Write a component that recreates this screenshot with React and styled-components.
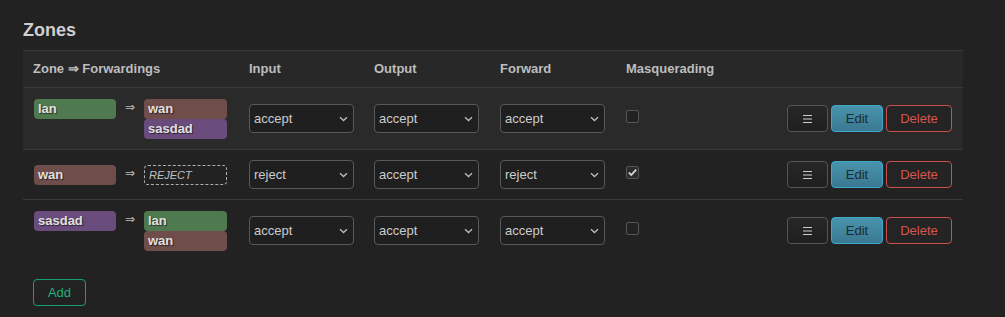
import React from "react";
import styled, { createGlobalStyle } from "styled-components";

const Global = createGlobalStyle`
  html, body { margin: 0; padding: 0; background: #222222; }
  body { font-family: "Liberation Sans", Arial, sans-serif; font-size: 13px; line-height: 16px; color: #cccccc; }
`;

const Page = styled.div`
  padding: 19px 0 0 23px;
  width: 940px;
`;

const Title = styled.h2`
  margin: 0 0 9px;
  font-size: 18px;
  line-height: 22px;
  font-weight: bold;
  color: #cfcfcf;
`;

const Table = styled.div`
  width: 940px;
`;

const GridRow = styled.div`
  display: grid;
  grid-template-columns: 216px 125px 126px 126px 1fr auto;
  align-items: center;
  border-top: 1px solid #3a3a3a;
  background: ${(p) => p.$bg || "transparent"};
`;

const HeadCell = styled.div`
  padding: 10px 10px;
  font-weight: bold;
  color: #bdbdbd;
  line-height: 16px;
`;

const Cell = styled.div`
  padding: 10px 10px;
  display: flex;
  align-items: center;
`;

const ZoneCell = styled.div`
  padding: 11px 10px 10px 11px;
  display: flex;
  align-items: flex-start;
`;

const Badge = styled.div`
  width: ${(p) => p.$w || 83}px;
  height: 20px;
  box-sizing: border-box;
  padding: 0 4px;
  border-radius: 4px;
  background: ${(p) => p.$color};
  color: #e0e0e0;
  font-weight: bold;
  font-size: 13px;
  line-height: 19px;
  text-shadow: 1px 1px 1px rgba(0, 0, 0, 0.6);
`;

const Arrow = styled.div`
  width: 28px;
  text-align: center;
  font-family: "DejaVu Sans", sans-serif;
  font-size: 12px;
  line-height: 16px;
  color: #bbbbbb;
`;

const Forwards = styled.div`
  display: flex;
  flex-direction: column;
`;

const Reject = styled.div`
  width: 83px;
  height: 20px;
  box-sizing: border-box;
  border: 1px dashed #b0b0b0;
  border-radius: 4px;
  padding: 0 4px;
  font-style: italic;
  font-size: 11px;
  line-height: 18px;
  color: #c0c0c0;
`;

const SelectWrap = styled.div`
  position: relative;
  width: 105px;
  height: 29px;
`;

const Select = styled.select`
  appearance: none;
  -webkit-appearance: none;
  width: 105px;
  height: 29px;
  box-sizing: border-box;
  border: 1px solid #585858;
  border-radius: 4px;
  background: #1f1f1f;
  color: #cccccc;
  font-family: "Liberation Sans", Arial, sans-serif;
  font-size: 13px;
  padding: 0 20px 0 4px;
  outline: none;
`;

const Chevron = styled.svg`
  position: absolute;
  right: 6px;
  top: 12px;
  pointer-events: none;
`;

const Check = styled.span`
  display: inline-flex;
  align-items: center;
  justify-content: center;
  width: 13px;
  height: 13px;
  box-sizing: border-box;
  border: 1px solid #565656;
  border-radius: 2px;
  background: ${(p) => (p.$on ? "#2c2c2c" : "#222222")};
  margin-top: -5px;
`;

const Actions = styled.div`
  display: flex;
  gap: 3px;
  padding: 0 11px 0 10px;
  justify-content: flex-end;
`;

const Btn = styled.button`
  height: 27px;
  width: ${(p) => p.$w}px;
  box-sizing: border-box;
  border-radius: 4px;
  font-family: "Liberation Sans", Arial, sans-serif;
  font-size: 13px;
  padding: 0;
  cursor: pointer;
  display: flex;
  align-items: center;
  justify-content: center;
  border: 1px solid ${(p) => p.$border};
  color: ${(p) => p.$color};
  background: ${(p) => p.$bg};
`;

const Footer = styled.div`
  padding: 18px 0 0 10px;
`;

function Dropdown({ value }) {
  return (
    <SelectWrap>
      <Select defaultValue={value}>
        <option value="accept">accept</option>
        <option value="reject">reject</option>
        <option value="drop">drop</option>
      </Select>
      <Chevron width="9" height="6" viewBox="0 0 9 6">
        <path d="M1 1.2 L4.5 4.5 L8 1.2" fill="none" stroke="#bdbdbd" strokeWidth="1.3" />
      </Chevron>
    </SelectWrap>
  );
}

function Checkbox({ on }) {
  return (
    <Check $on={on}>
      {on && (
        <svg width="11" height="11" viewBox="0 0 11 11">
          <path d="M1.8 5.6 L4.3 8 L9.2 2.6" fill="none" stroke="#d8d8d8" strokeWidth="1.8" />
        </svg>
      )}
    </Check>
  );
}

const COLORS = {
  lan: "#4f7a50",
  wan: "#6e4d4b",
  sasdad: "#6a4c7c",
};

const rows = [
  { zone: "lan", fw: ["wan", "sasdad"], input: "accept", output: "accept", forward: "accept", masq: false, bg: "#2a2a2a" },
  { zone: "wan", fw: [], input: "reject", output: "accept", forward: "reject", masq: true },
  { zone: "sasdad", fw: ["lan", "wan"], input: "accept", output: "accept", forward: "accept", masq: false },
];

function MenuIcon() {
  return (
    <svg width="11" height="10" viewBox="0 0 11 10">
      <path d="M1 1.5 H10 M1 5 H10 M1 8.5 H10" stroke="#cfcfcf" strokeWidth="1.1" />
    </svg>
  );
}

export default function App() {
  return (
    <>
      <Global />
      <Page>
        <Title>Zones</Title>
        <Table>
          <GridRow $bg="#282828">
            <HeadCell>Zone ⇒ Forwardings</HeadCell>
            <HeadCell>Input</HeadCell>
            <HeadCell>Output</HeadCell>
            <HeadCell>Forward</HeadCell>
            <HeadCell>Masquerading</HeadCell>
            <HeadCell />
          </GridRow>
          {rows.map((r) => (
            <GridRow key={r.zone} $bg={r.bg}>
              <ZoneCell>
                <Badge $color={COLORS[r.zone]} $w={82}>{r.zone}</Badge>
                <Arrow>⇒</Arrow>
                <Forwards>
                  {r.fw.length ? (
                    r.fw.map((f) => (
                      <Badge key={f} $color={COLORS[f]}>
                        {f}
                      </Badge>
                    ))
                  ) : (
                    <Reject>REJECT</Reject>
                  )}
                </Forwards>
              </ZoneCell>
              <Cell>
                <Dropdown value={r.input} />
              </Cell>
              <Cell>
                <Dropdown value={r.output} />
              </Cell>
              <Cell>
                <Dropdown value={r.forward} />
              </Cell>
              <Cell>
                <Checkbox on={r.masq} />
              </Cell>
              <Actions>
                <Btn $w={41} $border="#555555" $color="#cccccc" $bg="linear-gradient(#272727, #1f1f1f)">
                  <MenuIcon />
                </Btn>
                <Btn $w={52} $border="#3ea7cc" $color="#1c2a31" $bg="linear-gradient(#4993ad, #3a7890)">
                  Edit
                </Btn>
                <Btn $w={66} $border="#c9504d" $color="#d9544f" $bg="#242424">
                  Delete
                </Btn>
              </Actions>
            </GridRow>
          ))}
        </Table>
        <Footer>
          <Btn $w={53} $border="#17a06c" $color="#1fb078" $bg="linear-gradient(#242424, #202020)">
            Add
          </Btn>
        </Footer>
      </Page>
    </>
  );
}
